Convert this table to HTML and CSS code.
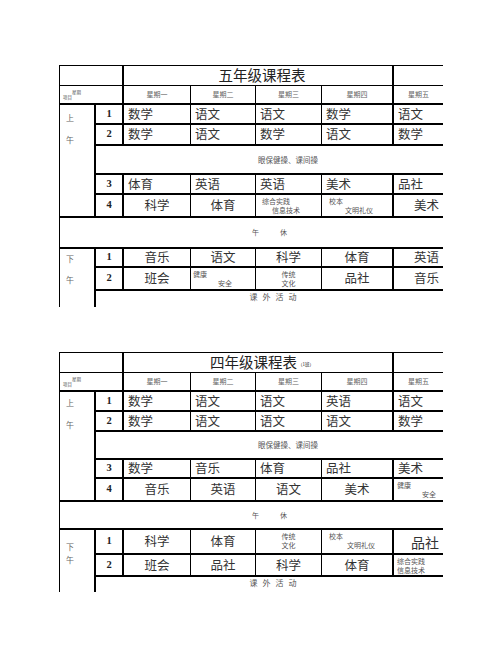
FILE: index.html
```html
<!DOCTYPE html>
<html lang="zh">
<head>
<meta charset="utf-8">
<link rel="stylesheet" href="styles.css">
</head>
<body>
<div class="page">

<div class="sched t1">
  <div class="cell span2"></div>
  <div class="cell span4 lk title">五年级课程表</div>
  <div class="cell lk"></div>

  <div class="cell span2 corner"><span class="wk">星期</span><span class="it">项目</span></div>
  <div class="cell lk day">星期一</div><div class="cell day">星期二</div><div class="cell day">星期三</div><div class="cell day">星期四</div><div class="cell lk day">星期五</div>

  <div class="cell tk rows5 sec am1"><span>上</span><span>午</span></div>
  <div class="cell tk lk no">1</div>
  <div class="cell tk lk s">数学</div><div class="cell tk s">语文</div><div class="cell tk s">语文</div><div class="cell tk s">数学</div><div class="cell tk lk s">语文</div>

  <div class="cell tk lk no">2</div>
  <div class="cell tk lk s">数学</div><div class="cell tk s">语文</div><div class="cell tk s">数学</div><div class="cell tk s">语文</div><div class="cell tk lk s">数学</div>

  <div class="cell tk lk span6 band eye">眼保健操、课间操</div>

  <div class="cell tk lk no">3</div>
  <div class="cell tk lk s">体育</div><div class="cell tk s">英语</div><div class="cell tk s">英语</div><div class="cell tk s">美术</div><div class="cell tk lk s">品社</div>

  <div class="cell tk lk no">4</div>
  <div class="cell tk lk s c">科学</div><div class="cell tk s c">体育</div>
  <div class="cell tk mini"><span class="in6">综合实践</span><span class="in16">信息技术</span></div>
  <div class="cell tk mini"><span class="in7">校本</span><span class="in23">文明礼仪</span></div>
  <div class="cell tk lk s r">美术</div>

  <div class="cell tk span7 band noon">午　　　休</div>

  <div class="cell tk rows3 sec pm1"><span>下</span><span>午</span></div>
  <div class="cell tk lk no">1</div>
  <div class="cell tk lk s c">音乐</div><div class="cell tk s c">语文</div><div class="cell tk s c">科学</div><div class="cell tk s c">体育</div><div class="cell tk lk s r">英语</div>

  <div class="cell tk lk no">2</div>
  <div class="cell tk lk s c">班会</div>
  <div class="cell tk mini"><span class="in2">健康</span><span class="in27">安全</span></div>
  <div class="cell tk mini c"><span>传统</span><span>文化</span></div>
  <div class="cell tk s c">品社</div><div class="cell tk lk s r">音乐</div>

  <div class="cell tk lk span6 band extra">课外活动</div>
</div>

<div class="sched t2">
  <div class="cell span2"></div>
  <div class="cell span4 lk title">四年级课程表<small class="cls">（1班）</small></div>
  <div class="cell lk"></div>

  <div class="cell span2 corner"><span class="wk">星期</span><span class="it">项目</span></div>
  <div class="cell lk day">星期一</div><div class="cell day">星期二</div><div class="cell day">星期三</div><div class="cell day">星期四</div><div class="cell lk day">星期五</div>

  <div class="cell tk rows5 sec am2"><span>上</span><span>午</span></div>
  <div class="cell tk lk no">1</div>
  <div class="cell tk lk s">数学</div><div class="cell tk s">语文</div><div class="cell tk s">语文</div><div class="cell tk s">英语</div><div class="cell tk lk s">语文</div>

  <div class="cell tk lk no">2</div>
  <div class="cell tk lk s">数学</div><div class="cell tk s">语文</div><div class="cell tk s">语文</div><div class="cell tk s">语文</div><div class="cell tk lk s">数学</div>

  <div class="cell tk lk span6 band eye">眼保健操、课间操</div>

  <div class="cell tk lk no">3</div>
  <div class="cell tk lk s">数学</div><div class="cell tk s">音乐</div><div class="cell tk s">体育</div><div class="cell tk s">品社</div><div class="cell tk lk s">美术</div>

  <div class="cell tk lk no">4</div>
  <div class="cell tk lk s c">音乐</div><div class="cell tk s c">英语</div><div class="cell tk s c">语文</div><div class="cell tk s c">美术</div>
  <div class="cell tk lk mini"><span class="in3">健康</span><span class="in28">安全</span></div>

  <div class="cell tk span7 band noon">午　　　休</div>

  <div class="cell tk rows3 sec pm2"><span>下</span><span>午</span></div>
  <div class="cell tk lk no">1</div>
  <div class="cell tk lk s c">科学</div><div class="cell tk s c">体育</div>
  <div class="cell tk mini c"><span>传统</span><span>文化</span></div>
  <div class="cell tk mini"><span class="in7">校本</span><span class="in25">文明礼仪</span></div>
  <div class="cell tk lk s r big">品社</div>

  <div class="cell tk lk no">2</div>
  <div class="cell tk lk s c">班会</div><div class="cell tk s c">品社</div><div class="cell tk s c">科学</div><div class="cell tk s c">体育</div>
  <div class="cell tk lk mini"><span class="in3">综合实践</span><span class="in3">信息技术</span></div>

  <div class="cell tk lk span6 band extra">课外活动</div>
</div>

</div>
</body>
</html>
```

FILE: styles.css
```css
html, body {
  margin: 0;
  padding: 0;
  background: #fff;
}

.page {
  padding: 65px 0 0 59px;
  font-family: "Noto Sans CJK SC", "Noto Sans", sans-serif;
  color: #333;
}

.sched {
  display: grid;
  width: 384px;
  grid-template-columns: 35px 28px 68px 65px 66px 71px 51px;
}

.t1 {
  grid-template-rows: 20px 18px 20px 21px 29px 20px 23px 31px 19px 23px 18px;
}

.t2 {
  margin-top: 45px;
  grid-template-rows: 20px 18px 20px 20px 28px 19px 23px 28px 25px 22px 17px;
}

.cell {
  box-sizing: border-box;
  border-top: 1px solid #000;
  border-left: 1px solid #000;
  display: flex;
  align-items: center;
  min-width: 0;
  white-space: nowrap;
  line-height: 1;
}

.tk { border-top-width: 2px; }
.lk { border-left-width: 2px; }

.span2 { grid-column: span 2; }
.span4 { grid-column: span 4; }
.span6 { grid-column: span 6; }
.span7 { grid-column: span 7; }
.rows5 { grid-row: span 5; }
.rows3 { grid-row: span 3; }

/* title */
.title {
  justify-content: center;
  font-size: 14.5px;
  color: #222;
  padding-left: 8px;
}
.cls {
  font-size: 4.5px;
  margin-left: 1px;
  margin-top: 3px;
}

/* header */
.corner {
  position: relative;
}
.corner span {
  position: absolute;
  font-size: 4.5px;
  color: #555;
}
.corner .wk { left: 12px; top: 4px; }
.corner .it { left: 3px; top: 9px; }

.day {
  justify-content: center;
  font-size: 7px;
  color: #666;
}

/* section labels */
.sec {
  flex-direction: column;
  align-items: flex-start;
  font-size: 8px;
  color: #666;
}
.sec span {
  padding-left: 6px;
}
.am1 span:first-child { margin-top: 9px; }
.am1 span + span { margin-top: 14px; }
.pm1 span:first-child { margin-top: 6px; }
.pm1 span + span { margin-top: 13px; }
.am2 span:first-child { margin-top: 7px; }
.am2 span + span { margin-top: 14px; }
.pm2 span:first-child { margin-top: 13px; }
.pm2 span + span { margin-top: 5px; }

/* period numbers */
.no {
  justify-content: center;
  font-family: "Liberation Serif", serif;
  font-size: 10.5px;
  font-weight: bold;
  color: #222;
}

/* subjects */
.s {
  font-size: 12.5px;
  padding-left: 4px;
}
.s.c { justify-content: center; padding-left: 0; }
.s.r { justify-content: flex-end; padding-left: 0; padding-right: 4px; }
.s.big { font-size: 14px; }

.mini {
  flex-direction: column;
  align-items: flex-start;
  font-size: 7px;
  color: #555;
  padding-top: 2px;
}
.mini span { display: block; line-height: 8px; }
.mini span + span { margin-top: 1px; }
.mini.c { align-items: center; }
.in2 { padding-left: 2px; }
.in3 { padding-left: 3px; }
.in6 { padding-left: 6px; }
.in7 { padding-left: 7px; }
.in16 { padding-left: 16px; }
.in23 { padding-left: 23px; }
.in25 { padding-left: 25px; }
.in27 { padding-left: 27px; }
.in28 { padding-left: 28px; }

/* full-width bands */
.band {
  justify-content: center;
  color: #555;
}
.eye {
  font-size: 7.5px;
  padding-left: 37px;
}
.noon {
  font-size: 7px;
  padding-left: 36px;
}
.extra {
  font-size: 8px;
  letter-spacing: 5px;
  padding-left: 12px;
  align-items: flex-start;
  padding-top: 2px;
}
```
